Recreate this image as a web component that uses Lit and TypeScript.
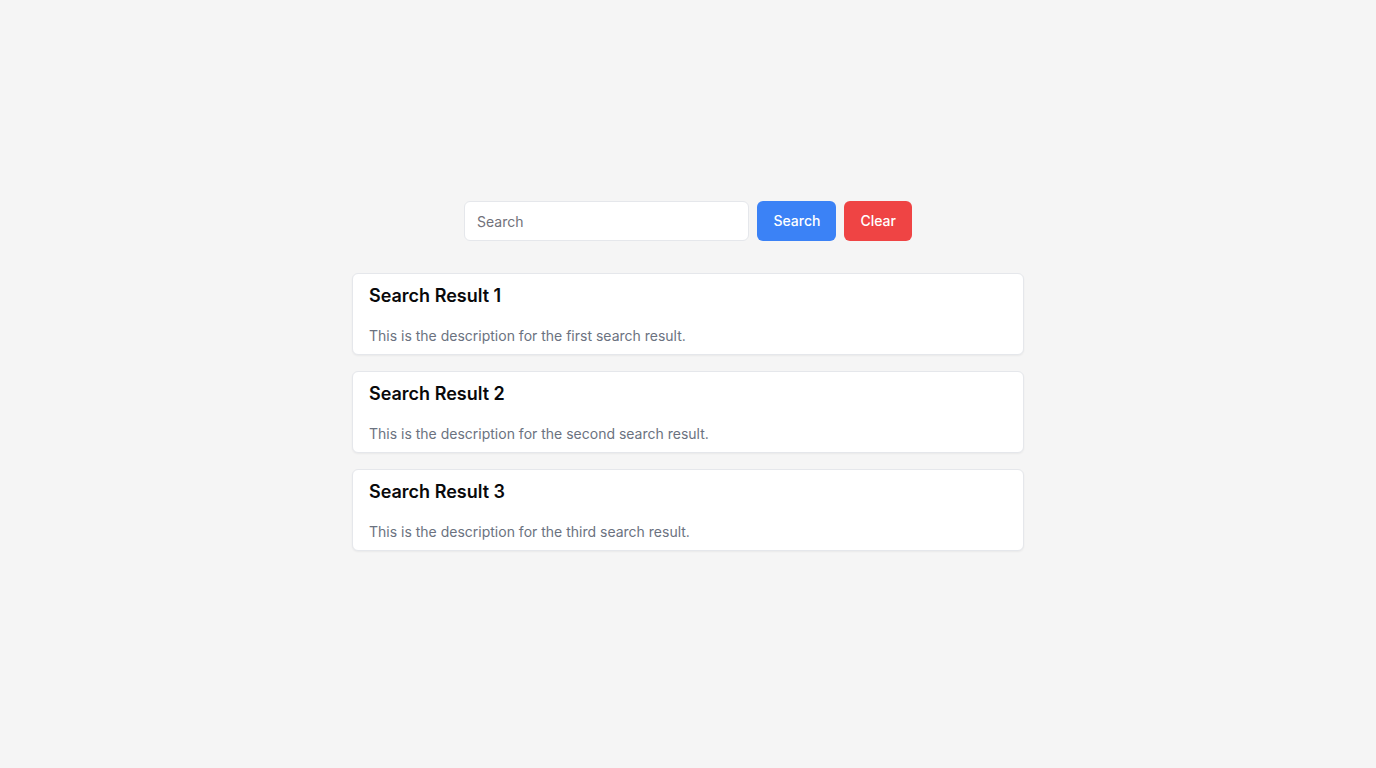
import { LitElement, html, css } from "lit";
import { customElement, property } from "lit/decorators.js";

interface SearchResult {
  title: string;
  description: string;
}

const RESULTS: SearchResult[] = [
  { title: "Search Result 1", description: "This is the description for the first search result." },
  { title: "Search Result 2", description: "This is the description for the second search result." },
  { title: "Search Result 3", description: "This is the description for the third search result." },
];

@customElement("result-card")
class ResultCard extends LitElement {
  static styles = css`
    :host {
      display: block;
    }
    .card {
      box-sizing: border-box;
      padding: 8px 16px;
      background: #ffffff;
      border: 1px solid #e5e7eb;
      border-radius: 6px;
      box-shadow: 0 1px 2px 0 rgba(0, 0, 0, 0.05);
    }
    .title {
      margin: 0;
      font-size: 18px;
      line-height: 28px;
      font-weight: 600;
      color: #09090b;
    }
    .description {
      margin: 16px 0 0;
      font-size: 14px;
      line-height: 20px;
      color: #6b7280;
    }
  `;

  @property() heading = "";
  @property() description = "";

  render() {
    return html`
      <article class="card">
        <h2 class="title">${this.heading}</h2>
        <p class="description">${this.description}</p>
      </article>
    `;
  }
}

@customElement("app-root")
class AppRoot extends LitElement {
  static styles = css`
    :host {
      display: flex;
      flex-direction: column;
      align-items: center;
      justify-content: center;
      box-sizing: border-box;
      min-height: 100vh;
      padding: 16px;
      background: #f5f5f5;
      font-family: Inter, sans-serif;
    }
    .search {
      display: flex;
      gap: 8px;
      width: 100%;
      max-width: 448px;
    }
    .field {
      flex: 1;
      min-width: 0;
      box-sizing: border-box;
      height: 40px;
      padding: 8px 12px;
      border: 1px solid #e5e7eb;
      border-radius: 6px;
      background: #ffffff;
      color: #09090b;
      font-family: inherit;
      font-size: 14px;
      line-height: 20px;
    }
    .field::placeholder {
      color: #71717a;
    }
    .button {
      height: 40px;
      padding: 8px 16px;
      border: 0;
      border-radius: 6px;
      color: #ffffff;
      font-family: inherit;
      font-size: 14px;
      line-height: 20px;
      font-weight: 500;
      cursor: pointer;
    }
    .primary {
      background: #3b82f6;
    }
    .danger {
      background: #ef4444;
    }
    .results {
      display: flex;
      flex-direction: column;
      gap: 16px;
      box-sizing: border-box;
      width: 100%;
      max-width: 672px;
      margin: 32px 0 0;
      padding: 0 0 16px;
    }
  `;

  private clear() {
    const field = this.renderRoot.querySelector<HTMLInputElement>(".field");
    if (field) field.value = "";
  }

  render() {
    return html`
      <form class="search" role="search" @submit=${(e: Event) => e.preventDefault()}>
        <input class="field" type="text" placeholder="Search" aria-label="Search" />
        <button class="button primary" type="submit">Search</button>
        <button class="button danger" type="button" @click=${this.clear}>Clear</button>
      </form>
      <section class="results" aria-label="Search results">
        ${RESULTS.map(
          (r) => html`<result-card .heading=${r.title} .description=${r.description}></result-card>`
        )}
      </section>
    `;
  }
}
